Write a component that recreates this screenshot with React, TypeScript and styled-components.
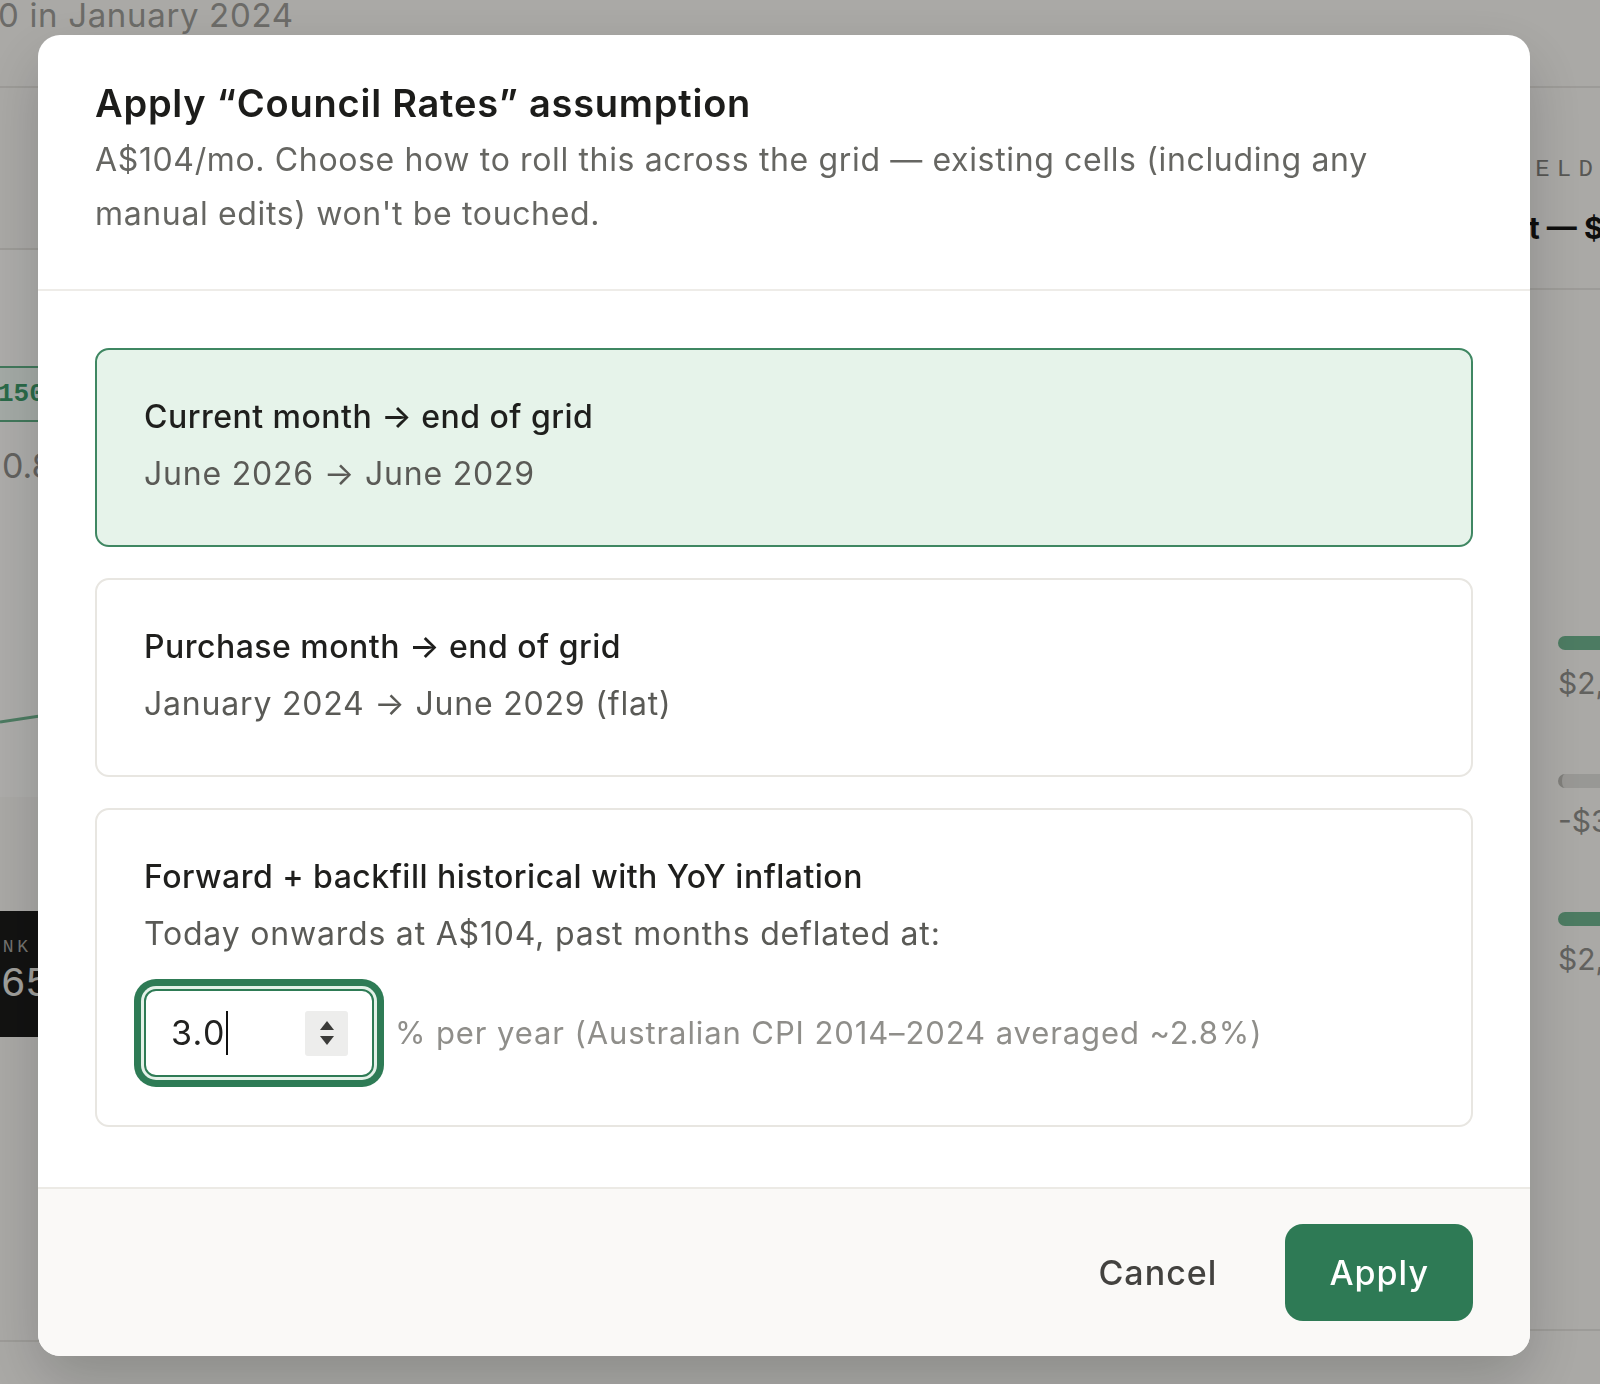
import React from "react";
import styled, { createGlobalStyle } from "styled-components";

const GlobalStyle = createGlobalStyle`
  html, body { margin: 0; padding: 0; }
  body {
    font-family: Inter, "Noto Sans", sans-serif;
    background: #f6f5f1;
    overflow: hidden;
    -webkit-font-smoothing: antialiased;
  }
  * { box-sizing: border-box; }
`;

/* ---------- background page (dimmed by overlay) ---------- */

const Page = styled.div`
  width: 1600px;
  height: 1384px;
  overflow: hidden;
  display: flex;
  flex-direction: column;
  background: #f6f5f1;
  color: #1d1d1b;
`;

const TopBar = styled.div`
  flex: none;
  height: 88px;
  border-bottom: 2px solid #e3e1dc;
  overflow: hidden;
  white-space: nowrap;
`;

const TopText = styled.div`
  font-size: 33px;
  line-height: 30px;
  letter-spacing: 0.02em;
  color: #9d9c97;
  margin-left: -2px;
`;

const Columns = styled.div`
  flex: 1;
  min-height: 0;
  display: grid;
  grid-template-columns: 1480px 400px;
`;

const LeftCol = styled.div`
  display: flex;
  flex-direction: column;
  overflow: hidden;
`;

const LeftHead = styled.div`
  flex: none;
  height: 162px;
  border-bottom: 2px solid #e3e1dc;
`;

const ChartArea = styled.div`
  flex: none;
  height: 547px;
  background: #fbfaf7;
  display: flex;
  flex-direction: column;
  padding-top: 116px;
`;

const GreenTag = styled.div`
  width: 220px;
  height: 56px;
  margin-left: -2px;
  border-top: 2px solid #5fae84;
  border-bottom: 2px solid #5fae84;
  background: #eef7f1;
  color: #3d9a6a;
  font-family: "Liberation Mono", monospace;
  font-size: 26px;
  font-weight: 700;
  line-height: 52px;
`;

const BigValue = styled.div`
  margin-top: 24px;
  margin-left: 2px;
  font-size: 34px;
  line-height: 40px;
  color: #8f8e8a;
`;

const ChartSvg = styled.svg`
  display: block;
  margin-top: 200px;
`;

const RankBox = styled.div`
  flex: none;
  margin-top: 114px;
  margin-left: -26px;
  width: 300px;
  height: 126px;
  background: #1b1b1a;
  display: flex;
  flex-direction: column;
  padding-top: 26px;
`;

const RankLabel = styled.div`
  font-family: "Liberation Mono", monospace;
  font-size: 18px;
  line-height: 20px;
  letter-spacing: 0.2em;
  color: #a8a7a2;
`;

const RankValue = styled.div`
  margin-top: 6px;
  margin-left: -24px;
  font-family: "Liberation Mono", monospace;
  font-size: 42px;
  line-height: 44px;
  color: #e8e7e2;
`;

const BottomRule = styled.div<{ $h: number }>`
  margin-top: auto;
  flex: none;
  height: ${(p) => p.$h}px;
  border-top: 2px solid #e3e1dc;
`;

const RightCol = styled.div`
  display: flex;
  flex-direction: column;
  overflow: hidden;
`;

const RightHead = styled.div`
  flex: none;
  height: 202px;
  border-bottom: 2px solid #e3e1dc;
  padding: 67px 0 0 12px;
  display: flex;
  flex-direction: column;
  gap: 23px;
`;

const Eyebrow = styled.div`
  font-family: "Liberation Mono", monospace;
  font-size: 24px;
  line-height: 30px;
  letter-spacing: 0.3em;
  color: #7f7e7a;
`;

const SideTitle = styled.div`
  margin-left: -4px;
  font-size: 30px;
  line-height: 40px;
  font-weight: 700;
  white-space: nowrap;
  color: #151514;
`;

const BarList = styled.div`
  padding: 346px 0 0 78px;
  display: flex;
  flex-direction: column;
  gap: 76px;
`;

const BarRow = styled.div`
  display: flex;
  flex-direction: column;
  gap: 18px;
`;

const Bar = styled.div<{ $tone: "green" | "grey" }>`
  width: 240px;
  height: 14px;
  border-radius: 7px;
  background: ${(p) => (p.$tone === "green" ? "#6fb38e" : "#dddcd8")};
  border-left: ${(p) => (p.$tone === "grey" ? "4px solid #b9b8b3" : "none")};
`;

const BarLabel = styled.div`
  font-size: 30px;
  line-height: 30px;
  color: #8f8e8a;
`;

/* ---------- modal ---------- */

const Overlay = styled.div`
  position: fixed;
  inset: 0;
  background: rgba(0, 0, 0, 0.31);
  display: flex;
  align-items: flex-start;
  padding: 35px 70px 0 38px;
`;

const Dialog = styled.div`
  flex: 1;
  background: #ffffff;
  border-radius: 22px;
  overflow: hidden;
  display: flex;
  flex-direction: column;
  box-shadow: 0 24px 60px rgba(0, 0, 0, 0.18);
`;

const Header = styled.div`
  padding: 46px 57px 48px;
  border-bottom: 2px solid #eeece8;
  display: flex;
  flex-direction: column;
  gap: 8px;
`;

const Title = styled.h2`
  margin: 0;
  font-size: 38px;
  line-height: 44px;
  font-weight: 600;
  color: #1c1c1a;
  letter-spacing: 0.02em;
`;

const Description = styled.p`
  margin: 0;
  max-width: 1300px;
  font-size: 32px;
  line-height: 54px;
  color: #666662;
  letter-spacing: 0.02em;
`;

const Body = styled.div`
  padding: 57px 57px 60px;
  display: flex;
  flex-direction: column;
  gap: 31px;
`;

const Option = styled.div<{ $selected?: boolean }>`
  border: 2px solid ${(p) => (p.$selected ? "#3f8762" : "#e8e6e1")};
  background: ${(p) => (p.$selected ? "#e6f3ea" : "#ffffff")};
  border-radius: 14px;
  padding: 44px 47px 48px;
  display: flex;
  flex-direction: column;
  gap: 11px;
  cursor: pointer;
`;

const OptionTitle = styled.div`
  font-size: 32px;
  line-height: 46px;
  font-weight: 500;
  color: #1f1f1d;
  letter-spacing: 0.015em;
`;

const OptionSub = styled.div`
  font-size: 32px;
  line-height: 46px;
  color: #5a5a56;
  letter-spacing: 0.025em;
`;

const InputRow = styled.div`
  margin-top: 21px;
  display: flex;
  align-items: center;
  gap: 21px;
`;

const NumberField = styled.div`
  flex: none;
  width: 230px;
  height: 88px;
  border: 2px solid #2e7b55;
  border-radius: 12px;
  background: #fff;
  box-shadow: 0 0 0 3px #e4f1e8, 0 0 0 10px #2e7b55;
  display: flex;
  align-items: center;
  justify-content: space-between;
  padding: 0 24px 0 25px;
`;

const FieldValue = styled.span`
  display: flex;
  align-items: center;
  font-size: 34px;
  line-height: 44px;
  letter-spacing: 0.04em;
  color: #222220;
`;

const Caret = styled.span`
  display: inline-block;
  width: 2px;
  height: 44px;
  background: #111;
`;

const Spinner = styled.span`
  width: 43px;
  height: 45px;
  border-radius: 3px;
  background: #ededec;
  display: flex;
  align-items: center;
  justify-content: center;
`;

const Hint = styled.span`
  font-size: 31px;
  line-height: 46px;
  color: #8f8e8a;
  letter-spacing: 0.029em;
  white-space: nowrap;
`;

const Footer = styled.div`
  border-top: 2px solid #eceae5;
  background: #faf9f7;
  padding: 35px 57px 35px;
  display: flex;
  justify-content: flex-end;
  align-items: center;
  gap: 34px;
`;

const Button = styled.button<{ $primary?: boolean }>`
  height: 97px;
  border: none;
  border-radius: 18px;
  font-family: Inter, "Noto Sans", sans-serif;
  font-size: 34px;
  font-weight: 500;
  letter-spacing: 0.03em;
  padding: ${(p) => (p.$primary ? "0 44px" : "0 34px")};
  background: ${(p) => (p.$primary ? "#2e7a55" : "transparent")};
  color: ${(p) => (p.$primary ? "#ffffff" : "#43423f")};
  cursor: pointer;
`;

export default function App() {
  return (
    <>
      <GlobalStyle />
      <Page aria-hidden="true">
        <TopBar>
          <TopText>0 in January 2024</TopText>
        </TopBar>
        <Columns>
          <LeftCol>
            <LeftHead />
            <ChartArea>
              <GreenTag>150,000</GreenTag>
              <BigValue>0.84</BigValue>
              <ChartSvg width="1480" height="60" viewBox="0 0 1480 60">
                <path d="M0 36 Q 20 33 40 30 T 400 12" fill="none" stroke="#6fb38e" strokeWidth="3" />
              </ChartSvg>
            </ChartArea>
            <RankBox>
              <RankLabel>RANK</RankLabel>
              <RankValue>$765</RankValue>
            </RankBox>
            <BottomRule $h={44} />
          </LeftCol>
          <RightCol>
            <RightHead>
              <Eyebrow>YIELD</Eyebrow>
              <SideTitle>Net — $1,204/yr</SideTitle>
            </RightHead>
            <BarList>
              <BarRow>
                <Bar $tone="green" />
                <BarLabel>$2,140</BarLabel>
              </BarRow>
              <BarRow>
                <Bar $tone="grey" />
                <BarLabel>-$310</BarLabel>
              </BarRow>
              <BarRow>
                <Bar $tone="green" />
                <BarLabel>$2,480</BarLabel>
              </BarRow>
            </BarList>
            <BottomRule $h={55} />
          </RightCol>
        </Columns>
      </Page>

      <Overlay>
        <Dialog role="dialog" aria-modal="true">
          <Header>
            <Title>Apply “Council Rates” assumption</Title>
            <Description>
              A$104/mo. Choose how to roll this across the grid — existing cells (including any
              manual edits) won't be touched.
            </Description>
          </Header>
          <Body>
            <Option $selected>
              <OptionTitle>Current month → end of grid</OptionTitle>
              <OptionSub>June 2026 → June 2029</OptionSub>
            </Option>
            <Option>
              <OptionTitle>Purchase month → end of grid</OptionTitle>
              <OptionSub>January 2024 → June 2029 (flat)</OptionSub>
            </Option>
            <Option>
              <OptionTitle>Forward + backfill historical with YoY inflation</OptionTitle>
              <OptionSub>Today onwards at A$104, past months deflated at:</OptionSub>
              <InputRow>
                <NumberField role="spinbutton" aria-valuenow={3}>
                  <FieldValue>
                    3.0
                    <Caret />
                  </FieldValue>
                  <Spinner>
                    <svg width="16" height="30" viewBox="0 0 16 30">
                      <path d="M8 3 L15 12 L1 12 Z" fill="#3b3b39" />
                      <path d="M1 18 L15 18 L8 27 Z" fill="#3b3b39" />
                    </svg>
                  </Spinner>
                </NumberField>
                <Hint>% per year (Australian CPI 2014–2024 averaged ~2.8%)</Hint>
              </InputRow>
            </Option>
          </Body>
          <Footer>
            <Button>Cancel</Button>
            <Button $primary>Apply</Button>
          </Footer>
        </Dialog>
      </Overlay>
    </>
  );
}
